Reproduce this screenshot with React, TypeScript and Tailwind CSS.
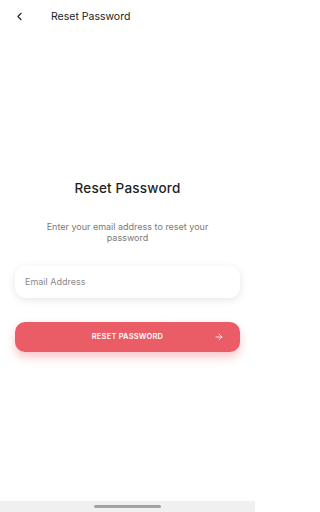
import { ArrowRight, ChevronLeft } from 'lucide-react'

export default function App() {
  return (
    <div
      className="flex h-[512px] w-[255px] flex-col bg-white text-[#1d1d1f]"
      style={{ fontFamily: 'Inter, "Noto Sans", sans-serif' }}
    >
      {/* Header */}
      <div className="flex h-[33px] items-center pl-[13px]">
        <ChevronLeft className="h-[13px] w-[13px] text-[#222]" strokeWidth={2} />
        <span className="ml-[25px] text-[10.5px] text-[#222]">Reset Password</span>
      </div>

      {/* Content */}
      <div className="flex flex-1 flex-col px-[15px] pt-[145px]">
        <h1 className="text-center text-[13.5px] font-medium leading-[20px] tracking-[0.2px] text-[#1f1f1f]">
          Reset Password
        </h1>
        <p className="mt-[23px] px-[20px] text-center text-[9px] leading-[11px] text-[#7a7a7a]">
          Enter your email address to reset your password
        </p>

        <div className="mt-[23px] flex h-[32px] items-center rounded-[10px] bg-white px-[10px] shadow-[0_2px_8px_rgba(0,0,0,0.10)]">
          <span className="text-[9px] text-[#8a8a8a]">Email Address</span>
        </div>

        <button className="relative mt-[24px] flex h-[30px] items-center justify-center rounded-[10px] bg-[#ea5d67] shadow-[0_5px_10px_rgba(234,93,103,0.35)]">
          <span className="text-[7.5px] font-semibold tracking-[0.2px] text-white">RESET PASSWORD</span>
          <ArrowRight className="absolute right-[16px] h-[10px] w-[10px] text-white" strokeWidth={2} />
        </button>
      </div>

      {/* System nav bar */}
      <div className="flex h-[11px] items-center justify-center bg-[#f0f0f0]">
        <div className="h-[3px] w-[67px] rounded-full bg-[#a3a3a3]" />
      </div>
    </div>
  )
}
